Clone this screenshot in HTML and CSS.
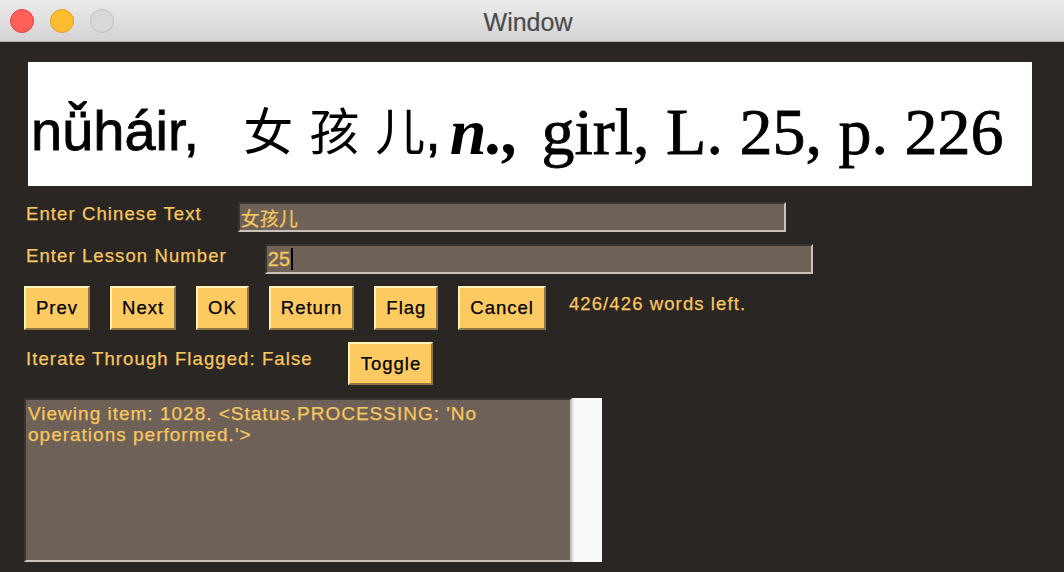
FILE: index.html
```html
<!DOCTYPE html>
<html lang="en">
<head>
<meta charset="utf-8">
<title>Window</title>
<link rel="stylesheet" href="styles.css">
</head>
<body>
<div class="window">
  <header class="titlebar">
    <div class="lights">
      <span class="light close"></span>
      <span class="light minimize"></span>
      <span class="light zoom"></span>
    </div>
    <div class="title">Window</div>
    <div class="spacer"></div>
  </header>
  <main class="content">
    <div class="banner"><span class="pin">nǚháir,</span><span class="cjk"><span class="spread">女孩</span>儿</span><span class="pin">,</span><span class="ital">n.,</span><span class="ser">girl, L. 25, p. 226</span></div>

    <div class="row">
      <label class="lbl">Enter Chinese Text</label>
      <div class="entry"><span class="entry-cjk">女孩儿</span></div>
    </div>

    <div class="row">
      <label class="lbl lesson">Enter Lesson Number</label>
      <div class="entry"><span class="entry-text">25</span><span class="caret"></span></div>
    </div>

    <div class="row buttons">
      <button class="btn">Prev</button>
      <button class="btn">Next</button>
      <button class="btn">OK</button>
      <button class="btn">Return</button>
      <button class="btn">Flag</button>
      <button class="btn">Cancel</button>
      <span class="lbl status">426/426 words left.</span>
    </div>

    <div class="row">
      <span class="lbl iterate">Iterate Through Flagged: False</span>
      <button class="btn toggle">Toggle</button>
    </div>

    <div class="log">
      <div class="log-text">Viewing item: 1028. &lt;Status.PROCESSING: 'No operations performed.'&gt;</div>
      <div class="scrollbar"></div>
    </div>
  </main>
</div>
</body>
</html>
```

FILE: styles.css
```css
html, body {
  margin: 0;
  padding: 0;
}

body {
  width: 1064px;
  height: 572px;
  overflow: hidden;
  background: #2a2623;
  font-family: "Liberation Sans", Arial, sans-serif;
}

.window {
  width: 1064px;
  height: 572px;
  display: flex;
  flex-direction: column;
}

/* ---------- title bar ---------- */
.titlebar {
  height: 41px;
  flex: 0 0 41px;
  box-sizing: content-box;
  border-bottom: 1px solid #b2b2b2;
  background: linear-gradient(#ebebeb, #d4d4d4);
  display: grid;
  grid-template-columns: 1fr auto 1fr;
  align-items: center;
}

.lights {
  display: flex;
  gap: 16px;
  padding-left: 10px;
}

.light {
  width: 24px;
  height: 24px;
  box-sizing: border-box;
  border-radius: 50%;
  border: 1px solid;
}

.light.close {
  background: #fe5f57;
  border-color: #e0443e;
}

.light.minimize {
  background: #febc2e;
  border-color: #dea123;
}

.light.zoom {
  background: #d9d9d9;
  border-color: #c0c0c0;
}

.title {
  font-family: "Liberation Sans", Arial, sans-serif;
  font-size: 25px;
  color: #4b4b4b;
  padding-top: 3px;
  margin-right: 8px;
  -webkit-text-stroke: 0.2px #4b4b4b;
}

/* ---------- content ---------- */
.content {
  display: flex;
  flex-direction: column;
  align-items: flex-start;
  gap: 12px;
  padding: 20px 0 0 24px;
}

.banner {
  width: 1004px;
  height: 124px;
  box-sizing: border-box;
  margin: 0 0 4px 4px;
  padding: 13px 0 0 3px;
  background: #ffffff;
  color: #000;
  white-space: nowrap;
  overflow: hidden;
  font-family: "Liberation Sans", Arial, sans-serif;
  font-size: 56px;
  line-height: 111px;
}

.banner span {
  line-height: 1;
}

.pin {
  font-family: "Liberation Sans", Arial, sans-serif;
  font-size: 56px;
  -webkit-text-stroke: 0.8px #000;
}

.cjk {
  font-family: "Noto Sans CJK SC", sans-serif;
  font-size: 50px;
  margin-left: 44px;
}

.spread {
  letter-spacing: 16px;
}

.ital {
  font-family: "Liberation Serif", "Times New Roman", serif;
  font-style: italic;
  font-weight: bold;
  font-size: 66px;
  margin-left: 9px;
  vertical-align: -4px;
}

.ser {
  font-family: "Liberation Serif", "Times New Roman", serif;
  font-size: 66px;
  margin-left: 22px;
  vertical-align: -4px;
  -webkit-text-stroke: 0.8px #000;
}

/* ---------- form rows ---------- */
.row {
  display: flex;
  align-items: flex-start;
}

.lbl {
  font-family: "Liberation Sans", Arial, sans-serif;
  font-size: 18.5px;
  letter-spacing: 1.1px;
  color: #f9c75f;
  -webkit-text-stroke: 0.25px #f9c75f;
  padding-left: 2px;
  margin-top: 1px;
  margin-right: 36px;
  white-space: nowrap;
}

.lesson {
  margin-right: 38px;
}

.entry {
  width: 548px;
  height: 30px;
  box-sizing: border-box;
  border: 2px solid;
  border-color: #3a3430 #c9c1ba #c9c1ba #3a3430;
  background: #6e6157;
  padding-left: 1px;
  display: flex;
  align-items: center;
  color: #f9c75f;
}

.entry-cjk {
  font-family: "Noto Sans CJK SC", sans-serif;
  font-size: 19px;
  line-height: 1;
  -webkit-text-stroke: 0.2px #f9c75f;
}

.entry-text {
  font-family: "Liberation Sans", Arial, sans-serif;
  font-size: 20px;
  line-height: 1;
  -webkit-text-stroke: 0.3px #f9c75f;
}

.caret {
  width: 2px;
  height: 22px;
  background: #000;
  margin-left: 1px;
}

/* ---------- buttons ---------- */
.buttons {
  gap: 20px;
}

.btn {
  height: 44px;
  box-sizing: border-box;
  margin: 0;
  padding: 0 10px;
  font-family: "Liberation Sans", Arial, sans-serif;
  font-size: 18.5px;
  letter-spacing: 1px;
  color: #000;
  -webkit-text-stroke: 0.25px #000;
  background: #fdc961;
  border: 2px solid;
  border-color: #fff2b6 #8e7542 #8e7542 #fff2b6;
  border-radius: 0;
  cursor: default;
}

.status {
  margin-top: 7px;
  margin-left: 3px;
  padding-left: 0;
}

.iterate {
  margin-top: 6px;
  margin-right: 35px;
}

.toggle {
  height: 43px;
  padding: 0 10px 0 11px;
}

/* ---------- log ---------- */
.log {
  display: flex;
  margin-top: 1px;
}

.log-text {
  width: 548px;
  height: 164px;
  box-sizing: border-box;
  border: 2px solid;
  border-color: #3a3430 #c9c1ba #c9c1ba #3a3430;
  background: #6e6157;
  padding: 3px 2px 0 2px;
  font-family: "Liberation Sans", Arial, sans-serif;
  font-size: 19px;
  letter-spacing: 1px;
  line-height: 21px;
  color: #f9c75f;
  -webkit-text-stroke: 0.25px #f9c75f;
}

.scrollbar {
  width: 30px;
  height: 164px;
  box-sizing: border-box;
  background: #fafafa;
  border-left: 2px solid #e6e6e6;
}
```
